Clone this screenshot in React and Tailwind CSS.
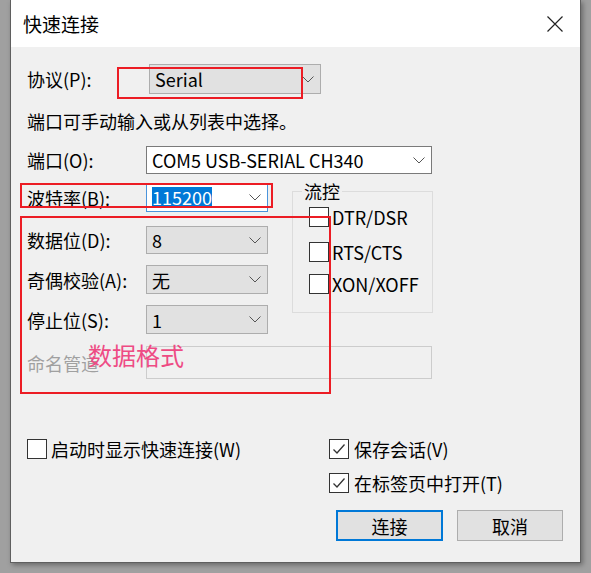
import React from "react";

const font = { fontFamily: '"Noto Sans CJK SC", "Noto Sans", sans-serif' };

const Chevron = () => (
    <svg width="12" height="7" viewBox="0 0 12 7" className="shrink-0">
        <polyline points="0.5,0.5 6,6 11.5,0.5" fill="none" stroke="#555" strokeWidth="1" />
    </svg>
);

const Check = () => (
    <svg width="14" height="12" viewBox="0 0 14 12">
        <polyline points="1.5,6.5 5,10 12.5,1.5" fill="none" stroke="#333" strokeWidth="1.3" />
    </svg>
);

const Box = ({ checked }) => (
    <div className="w-[20px] h-[20px] border border-[#333] bg-white flex items-center justify-center shrink-0">
        {checked && <Check />}
    </div>
);

const Combo = ({ value, w, gray }) => (
    <div className={`${w} h-full flex items-center justify-between pl-[5px] pr-[6px] border ${gray ? "bg-[#e1e1e1] border-[#adadad]" : "bg-white border-[#7a7a7a]"}`}>
        <span>{value}</span>
        <Chevron />
    </div>
);

const Label = ({ text, k, w = "w-[119px]" }) => (
    <div className={`${w} shrink-0`}>
        {text}({k}):
    </div>
);

export default function App() {
    return (
        <div className="relative w-[591px] h-[573px] bg-[#a0a0a0] overflow-hidden text-[18px] leading-[24px] text-black" style={font}>
            <div className="ml-[10px] w-[571px] h-[563px] border border-t-0 border-[#5f5f5f] bg-[#f0f0f0] flex flex-col shadow-[2px_2px_5px_rgba(0,0,0,0.35)]">
                <div className="h-[47px] bg-white flex items-center justify-between pl-[12px] pr-[17px] shrink-0">
                    <span className="text-[19px]">快速连接</span>
                    <svg width="16" height="16" viewBox="0 0 16 16">
                        <path d="M0.5 0.5 L15.5 15.5 M15.5 0.5 L0.5 15.5" stroke="#222" strokeWidth="1.2" />
                    </svg>
                </div>

                <div className="flex flex-col pl-[16px]">
                    <div className="mt-[17px] h-[30px] flex items-center">
                        <Label text="协议" k="P" w="w-[122px]" />
                        <Combo value="Serial" w="w-[172px]" gray />
                    </div>

                    <div className="mt-[15px] h-[24px]">端口可手动输入或从列表中选择。</div>

                    <div className="mt-[13px] h-[28px] flex items-center">
                        <Label text="端口" k="O" />
                        <Combo value="COM5 USB-SERIAL CH340" w="w-[286px]" />
                    </div>

                    <div className="mt-[9px] flex">
                        <div className="w-[241px] flex flex-col">
                            <div className="h-[29px] flex items-center">
                                <Label text="波特率" k="B" />
                                <div className="w-[122px] h-full flex items-center justify-between pl-[5px] pr-[6px] bg-white border border-[#4a94dc]">
                                    <span className="bg-[#0078d7] text-white leading-[21px]">115200</span>
                                    <Chevron />
                                </div>
                            </div>
                            <div className="mt-[14px] h-[28px] flex items-center">
                                <Label text="数据位" k="D" />
                                <Combo value="8" w="w-[122px]" gray />
                            </div>
                            <div className="mt-[11px] h-[29px] flex items-center">
                                <Label text="奇偶校验" k="A" />
                                <Combo value="无" w="w-[122px]" gray />
                            </div>
                            <div className="mt-[11px] h-[29px] flex items-center">
                                <Label text="停止位" k="S" />
                                <Combo value="1" w="w-[122px]" gray />
                            </div>
                        </div>

                        <div className="relative ml-[24px] mt-[8px] w-[141px] h-[122px] border border-[#dcdcdc] flex flex-col pl-[16px] pt-[15px]">
                            <span className="absolute left-[9px] -top-[13px] px-[2px] bg-[#f0f0f0]">流控</span>
                            <div className="h-[19px] flex items-center gap-[3px]">
                                <Box />
                                <span>DTR/DSR</span>
                            </div>
                            <div className="mt-[16px] h-[19px] flex items-center gap-[3px]">
                                <Box />
                                <span>RTS/CTS</span>
                            </div>
                            <div className="mt-[13px] h-[19px] flex items-center gap-[3px]">
                                <Box />
                                <span>XON/XOFF</span>
                            </div>
                        </div>
                    </div>

                    <div className="mt-[12px] h-[33px] flex items-center">
                        <div className="w-[119px] shrink-0 text-[#a0a0a0]">命名管道</div>
                        <div className="w-[286px] h-full border border-[#cccccc] bg-[#f0f0f0]" />
                    </div>

                    <div className="mt-[60px] flex">
                        <div className="w-[302px] h-[20px] flex items-center gap-[4px]">
                            <Box />
                            <span>启动时显示快速连接(W)</span>
                        </div>
                        <div className="flex flex-col">
                            <div className="h-[20px] flex items-center gap-[5px]">
                                <Box checked />
                                <span>保存会话(V)</span>
                            </div>
                            <div className="mt-[14px] h-[20px] flex items-center gap-[5px]">
                                <Box checked />
                                <span>在标签页中打开(T)</span>
                            </div>
                        </div>
                    </div>

                    <div className="mt-[17px] flex justify-end pr-[17px] gap-[14px]">
                        <div className="w-[107px] h-[31px] border-2 border-[#0078d7] bg-[#e1e1e1] flex items-center justify-center">连接</div>
                        <div className="w-[106px] h-[31px] border border-[#adadad] bg-[#e1e1e1] flex items-center justify-center">取消</div>
                    </div>
                </div>
            </div>

            <div className="absolute left-[117px] top-[67px] w-[186px] h-[32px] border-2 border-[#ec1c24]" />
            <div className="absolute left-[20px] top-[183px] w-[253px] h-[25px] border-2 border-[#ec1c24]" />
            <div className="absolute left-[20px] top-[216px] w-[311px] h-[178px] border-2 border-[#ec1c24]" />
            <div className="absolute left-[88px] top-[340px] text-[24px] leading-[30px] text-[#ee4b84]">数据格式</div>
        </div>
    );
}
